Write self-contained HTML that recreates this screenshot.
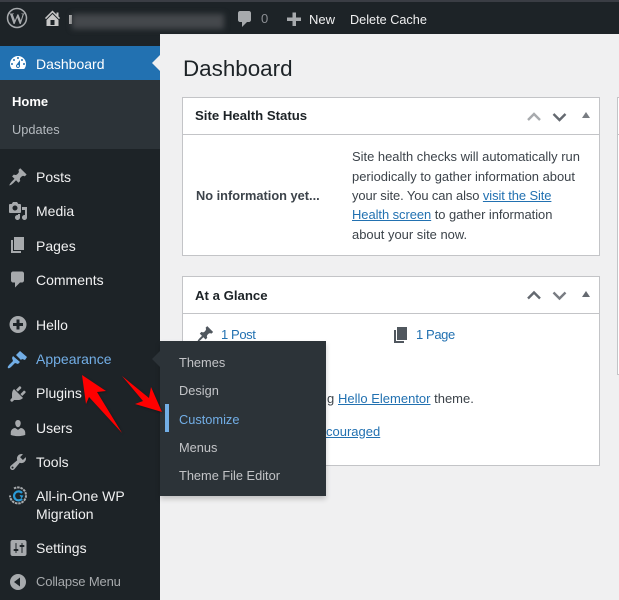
<!DOCTYPE html>
<html><head><meta charset="utf-8"><style>
html,body{margin:0;padding:0}
body{width:619px;height:600px;position:relative;overflow:hidden;background:#f0f0f1;font-family:"Liberation Sans",Arial,sans-serif;font-size:14px;color:#3c434a}
div{position:absolute}
.t{position:absolute;white-space:nowrap;line-height:20px;height:20px}
.m{left:36px;color:#f0f0f1;font-size:14px}
.s{left:179px;color:#c3c4c7;font-size:12.8px}
.p{left:352px;font-size:12.950px;color:#3c434a}
a{color:#2271b1;text-decoration:underline}
.box{background:#fff;border:1px solid #c3c4c7;box-sizing:border-box}
.h{font-weight:bold;font-size:13.2px;color:#1d2327}
</style></head><body>
<div style="left:0;top:0;width:619px;height:34px;background:#1d2327"></div>
<div style="left:0;top:0;width:619px;height:2px;background:#3a3d44"></div>
<div style="left:0;top:34px;width:160px;height:566px;background:#1d2327"></div>
<div style="left:0;top:46px;width:160px;height:34px;background:#2271b1"></div>
<div style="left:0;top:80px;width:160px;height:69px;background:#2c3338"></div>
<div style="left:152px;top:55px;width:0;height:0;border:8px solid transparent;border-left:0;border-right-color:#f0f0f1"></div>

<div class="box" style="left:182px;top:97px;width:418px;height:159px"></div>
<div style="left:183px;top:134px;width:416px;height:1px;background:#c3c4c7"></div>
<div class="box" style="left:182px;top:276px;width:418px;height:190px"></div>
<div style="left:183px;top:313px;width:416px;height:1px;background:#c3c4c7"></div>
<div class="box" style="left:617px;top:97px;width:20px;height:278px"></div>
<div style="left:618px;top:134px;width:2px;height:1px;background:#c3c4c7"></div>

<span class="t" style="left:183px;top:55px;height:28px;line-height:28px;font-size:22.4px;color:#1d2327">Dashboard</span>
<span class="t h" style="left:195px;top:106px">Site Health Status</span>
<span class="t h" style="left:195px;top:286px">At a Glance</span>
<span class="t" style="left:196px;top:186px;font-weight:bold;font-size:12.8px;color:#3c434a">No information yet...</span>
<span class="t p" style="top:147px">Site health checks will automatically run</span>
<span class="t p" style="top:167px">periodically to gather information about</span>
<span class="t p" style="top:186px;letter-spacing:-.09px">your site. You can also <a href="#">visit the Site</a></span>
<span class="t p" style="top:205px;letter-spacing:-.05px"><a href="#">Health screen</a> to gather information</span>
<span class="t p" style="top:225px">about your site now.</span>
<span class="t" style="left:221px;top:325px;font-size:13px;letter-spacing:-.4px;color:#2271b1">1 Post</span>
<span class="t" style="left:416px;top:325px;font-size:13px;letter-spacing:-.4px;color:#2271b1">1 Page</span>
<span class="t" style="left:327px;top:389px;font-size:13px">g</span>
<span class="t" style="left:338px;top:389px;font-size:13px"><a href="#">Hello Elementor</a> theme.</span>
<span class="t" style="left:326px;top:422px;font-size:13px"><a href="#">couraged</a></span>

<svg style="position:absolute;left:0;top:0" width="619" height="600" viewBox="0 0 619 600">
 <g fill="none" stroke-width="2.4"><path d="M528 120l6-6 6 6" stroke="#a7aaad"/><path d="M553.500 114l6 6 6-6" stroke="#646970"/><path d="M528 298.500l6-6 6 6" stroke="#646970"/><path d="M553.500 292.500l6 6 6-6" stroke="#787c82"/></g>
 <path d="M582 118l4-6 4 6z" fill="#787c82"/><path d="M582 297l4-6 4 6z" fill="#646970"/>
 <path transform="translate(196 325) scale(.92)" fill="#50575e" d="M10.44 3.02l1.82-1.82 6.36 6.35-1.83 1.82c-1.05-.68-2.48-.57-3.41.36l-.75.75c-.92.93-1.04 2.35-.35 3.41l-1.83 1.82-2.41-2.41-2.8 2.79c-.42.42-3.38 2.71-3.8 2.29s1.86-3.39 2.28-3.81l2.79-2.79L4.1 9.36l1.83-1.82c1.05.69 2.48.57 3.4-.36l.75-.75c.93-.92 1.05-2.35.36-3.41z"/>
 <path transform="translate(391 325)" fill="#50575e" d="M6 15V2h10v13H6zm-1 1h8v2H3V5h2v11z"/>
</svg>

<!-- top bar -->
<svg style="position:absolute;left:0;top:0" width="320" height="34" viewBox="0 0 320 34">
 <circle cx="17" cy="18" r="9.500" fill="none" stroke="#a7aaad" stroke-width="1.500"/>
 <text x="17" y="23.800" text-anchor="middle" font-family="Liberation Serif" font-weight="bold" font-size="16" fill="#a7aaad">W</text>
 <path transform="translate(42.500 8)" fill="#c8c8c8" d="M16 8.500l1.530 1.530-1.060 1.060L10 4.620l-6.470 6.470-1.060-1.060L10 2.500l4 4v-2h2v4zm-6-2.460l6 5.990V18H4v-5.970zM12 17v-5H8v5h4z"/>
 <path transform="translate(235 9)" fill="#a7aaad" d="M5 2h9c1.100 0 2 .9 2 2v7c0 1.100-.9 2-2 2h-2l-5 5v-5H5c-1.100 0-2-.9-2-2V4c0-1.100.9-2 2-2z"/>
 <path d="M292.500 12.500h3.500v5h5v3.500h-5v5h-3.500v-5H287v-3.500h5.500z" fill="#a7aaad"/>
</svg>
<div style="left:69px;top:15px;width:3px;height:9px;background:#bbb"></div>
<div style="left:72px;top:14px;width:152px;height:15px;background:#45484c;filter:blur(3px)"></div>
<span class="t" style="left:261px;top:9px;font-size:13px;color:#8c8f94">0</span>
<span class="t" style="left:309px;top:10px;font-size:13px;color:#f0f0f1">New</span>
<span class="t" style="left:350px;top:10px;font-size:12.700px;color:#f0f0f1">Delete Cache</span>

<!-- menu -->
<span class="t m" style="top:54px;color:#fff">Dashboard</span>
<span class="t" style="left:12px;top:92px;font-size:13px;font-weight:bold;color:#fff">Home</span>
<span class="t" style="left:12px;top:120px;font-size:12.8px;color:#b4b9be">Updates</span>
<span class="t m" style="top:167px">Posts</span>
<span class="t m" style="top:201px">Media</span>
<span class="t m" style="top:236px">Pages</span>
<span class="t m" style="top:270px">Comments</span>
<span class="t m" style="top:315px">Hello</span>
<span class="t m" style="top:349px;color:#72aee6">Appearance</span>
<span class="t m" style="top:383px">Plugins</span>
<span class="t m" style="top:418px">Users</span>
<span class="t m" style="top:452px">Tools</span>
<span class="t m" style="top:486px">All-in-One WP</span>
<span class="t m" style="top:504px">Migration</span>
<span class="t m" style="top:538px">Settings</span>
<span class="t m" style="top:572px;font-size:13px;letter-spacing:-.15px;color:#a7aaad">Collapse Menu</span>

<svg style="position:absolute;left:0;top:0" width="160" height="600" viewBox="0 0 160 600">
 <path transform="translate(8 53)" fill="#fff" d="M3.760 16h12.480c1.100-1.370 1.760-3.110 1.760-5 0-4.420-3.580-8-8-8s-8 3.580-8 8c0 1.890.66 3.630 1.760 5zM10 4c.55 0 1 .45 1 1s-.45 1-1 1-1-.45-1-1 .45-1 1-1zM6 6c.55 0 1 .45 1 1s-.45 1-1 1-1-.45-1-1 .45-1 1-1zm8 0c.55 0 1 .45 1 1s-.45 1-1 1-1-.45-1-1 .45-1 1-1zm-5.370 5.550L12 7v6c0 1.100-.9 2-2 2s-2-.9-2-2c0-.57.24-1.080.63-1.450zM4 10c.55 0 1 .45 1 1s-.45 1-1 1-1-.45-1-1 .45-1 1-1zm12 0c.55 0 1 .45 1 1s-.45 1-1 1-1-.45-1-1 .45-1 1-1zm-5 3c0-.55-.45-1-1-1s-1 .45-1 1 .45 1 1 1 1-.45 1-1z"/>
 <g fill="#a7aaad">
 <path transform="translate(8 167)" d="M10.440 3.020l1.820-1.820 6.360 6.350-1.830 1.820c-1.050-.68-2.480-.57-3.410.36l-.75.75c-.92.93-1.040 2.350-.35 3.410l-1.830 1.820-2.410-2.410-2.800 2.790c-.42.42-3.380 2.710-3.800 2.290s1.860-3.390 2.280-3.810l2.790-2.790L4.100 9.360l1.830-1.820c1.050.69 2.480.57 3.400-.36l.75-.75c.93-.92 1.050-2.350.36-3.410z"/>
 <path transform="translate(8 201)" d="M13 11V4c0-.55-.45-1-1-1h-1.670L9 1H5L3.670 3H2c-.55 0-1 .45-1 1v7c0 .55.45 1 1 1h10c.55 0 1-.45 1-1zM7 4.500c1.380 0 2.500 1.120 2.500 2.500S8.380 9.500 7 9.500 4.500 8.380 4.500 7 5.620 4.500 7 4.500zM14 6h5v10.500c0 1.380-1.120 2.500-2.500 2.500S14 17.880 14 16.500s1.120-2.500 2.500-2.500c.17 0 .34.020.5.050V9h-3V6zm-4 8.050V13h2v3.500c0 1.380-1.120 2.500-2.500 2.500S7 17.880 7 16.500 8.120 14 9.500 14c.17 0 .34.020.5.050z"/>
 <path transform="translate(8 235)" d="M6 15V2h10v13H6zm-1 1h8v2H3V5h2v11z"/>
 <path transform="translate(8 269.500)" d="M5 2h9c1.100 0 2 .9 2 2v7c0 1.100-.9 2-2 2h-2l-5 5v-5H5c-1.100 0-2-.9-2-2V4c0-1.100.9-2 2-2z"/>
 <path fill-rule="evenodd" d="M18 316a8.500 8.500 0 1 1 0 17 8.500 8.500 0 0 1 0-17zm-1.500 3.500v3.500H13v3h3.500v3.500h3V326H23v-3h-3.500v-3.500z"/>
 <path transform="translate(8 384)" d="M13.110 4.360L9.870 7.600 8 5.730l3.240-3.240c.35-.34 1.050-.2 1.560.32.52.51.66 1.210.31 1.550zm-8 1.770l.91-1.120 9.010 9.010-1.190.84c-.71.71-2.630 1.160-3.820 1.160H6.140L4.900 17.260c-.59.59-1.540.59-2.120 0-.59-.58-.59-1.530 0-2.120l1.240-1.240v-3.880c0-1.130.4-3.190 1.090-3.890zm7.260 3.970l3.240-3.240c.34-.35 1.040-.21 1.550.31.52.51.66 1.210.31 1.550l-3.240 3.250z"/>
 <path transform="translate(8 418)" d="M10 9.250c-2.270 0-2.730-3.440-2.730-3.440C7 4.020 7.820 2 9.970 2c2.160 0 2.980 2.020 2.710 3.810 0 0-.41 3.440-2.680 3.440zm0 2.570L12.720 10c2.390 0 4.520 2.330 4.520 4.530v2.490s-3.650 1.130-7.240 1.130c-3.650 0-7.240-1.130-7.240-1.130v-2.490c0-2.250 1.940-4.480 4.470-4.480z"/>
 <path transform="translate(8 452)" d="M16.680 9.770c-1.340 1.340-3.300 1.670-4.950.99l-5.410 6.520c-.99.99-2.590.99-3.580 0s-.99-2.590 0-3.570l6.520-5.420c-.68-1.650-.35-3.610.99-4.950 1.280-1.280 3.120-1.620 4.720-1.060l-2.890 2.890 2.820 2.820 2.860-2.870c.53 1.580.18 3.390-1.080 4.650zM3.810 16.210c.4.390 1.040.39 1.430 0 .4-.4.4-1.040 0-1.430-.39-.4-1.030-.4-1.430 0-.39.39-.39 1.030 0 1.430z"/>
 <path transform="translate(8.500 538)" d="M18 16V4c0-1.100-.9-2-2-2H4c-1.100 0-2 .9-2 2v12c0 1.100.9 2 2 2h12c1.100 0 2-.9 2-2zM8 11h1c.55 0 1 .45 1 1s-.45 1-1 1H8v1.500c0 .28-.22.5-.5.5s-.5-.22-.5-.5V13H6c-.55 0-1-.45-1-1s.45-1 1-1h1V5.500c0-.28.22-.5.5-.5s.5.22.5.5V11zm5-2h-1c-.55 0-1-.45-1-1s.45-1 1-1h1V5.500c0-.28.22-.5.5-.5s.5.22.5.5V7h1c.55 0 1 .45 1 1s-.45 1-1 1h-1v5.500c0 .28-.22.5-.5.5s-.5-.22-.5-.5V9z"/>
 <path fill-rule="evenodd" d="M18 574a8 8 0 1 1 0 16 8 8 0 0 1 0-16zm2 3.500l-6 4.500 6 4.500z"/>
 </g>
 <path d="M14 488.500a8 8 0 1 1-4 7" fill="none" stroke="#a7aaad" stroke-width="2" stroke-dasharray="2.500 .8"/>
 <path d="M22 493a4.500 4.500 0 1 0 0 5.800" fill="none" stroke="#2a9bd8" stroke-width="2.200"/><path d="M19.500 495l4 .5-1.800 3z" fill="#2a9bd8"/>
 <path fill="#72aee6" d="M20 351l7 6-2 3-3-1-1 1-5-5zM13 356l7 6-2 2-3-1-3 3c-1 1-3 3-4 2s1-3 2-4l3-3-1-3z"/>
</svg>

<!-- flyout -->
<div style="left:160px;top:341px;width:166px;height:155px;background:#2c3338;box-shadow:0 3px 5px rgba(0,0,0,.2)"></div>
<div style="left:152px;top:351px;width:0;height:0;border:8px solid transparent;border-left:0;border-right-color:#2c3338"></div>
<div style="left:165px;top:404px;width:4px;height:28px;background:#72aee6"></div>
<span class="t s" style="top:353px">Themes</span>
<span class="t s" style="top:381px">Design</span>
<span class="t s" style="top:410px;color:#72aee6">Customize</span>
<span class="t s" style="top:438px">Menus</span>
<span class="t s" style="top:466px">Theme File Editor</span>

<!-- arrows -->
<svg style="position:absolute;left:0;top:0;filter:drop-shadow(1px 1px 1px rgba(0,0,0,.3))" width="200" height="450" viewBox="0 0 200 450">
 <path d="M82 375l24 16-9 1 25 41-33-36-3 7z" fill="#f00"/>
 <path d="M162 412l-11-25-2 11-27-22 21 25-8 3z" fill="#f00"/>
</svg>
</body></html>
